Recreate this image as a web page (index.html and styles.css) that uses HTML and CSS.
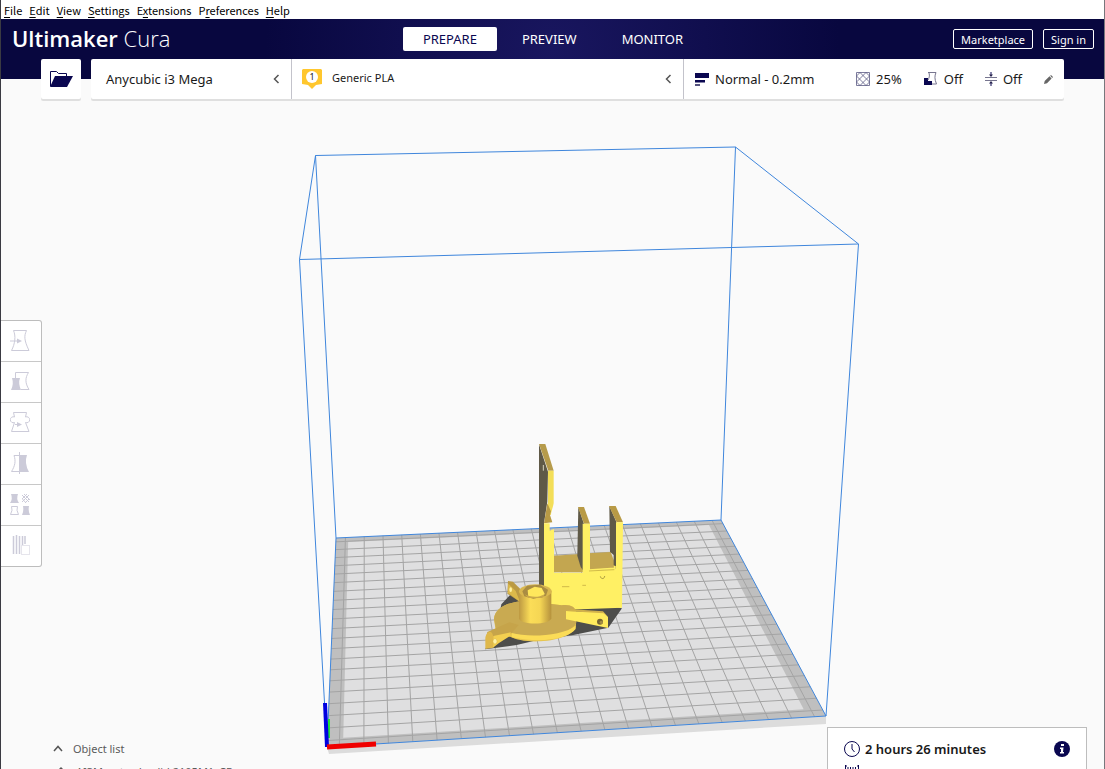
FILE: index.html
```html
<!DOCTYPE html>
<html lang="en">
<head>
<meta charset="utf-8">
<title>Ultimaker Cura</title>
<link rel="stylesheet" href="styles.css">
</head>
<body>
<div class="app">
  <nav class="menubar" aria-label="Application menu">
    <button class="menu"><u>F</u>ile</button>
    <button class="menu"><u>E</u>dit</button>
    <button class="menu"><u>V</u>iew</button>
    <button class="menu"><u>S</u>ettings</button>
    <button class="menu">E<u>x</u>tensions</button>
    <button class="menu">P<u>r</u>eferences</button>
    <button class="menu"><u>H</u>elp</button>
  </nav>

  <header class="header">
    <h1 class="brand"><b>Ultimaker</b> Cura</h1>
    <nav class="stages" aria-label="Stages">
      <button class="stage stage-active">PREPARE</button>
      <button class="stage">PREVIEW</button>
      <button class="stage">MONITOR</button>
    </nav>
    <div class="account">
      <button class="outline">Marketplace</button>
      <button class="outline">Sign in</button>
    </div>
  </header>

  <main class="workspace">
    <svg class="scene" viewBox="1 79 1103 690" preserveAspectRatio="xMidYMid slice" role="img" aria-label="Build plate with model">
      <path d="M327 747 826 716V724L329 754Z" fill="#dcdcdc"/>
      <g id="plate"></g>
      <g fill="none" stroke="#3f86dc" stroke-width="1">
        <path d="M336 538 721 520 826 716 327 747Z"/>
        <path d="M315.500 155.500 735.500 147 858.500 244 299.500 259.500Z"/>
        <path d="M315.500 155.500 336 538M735.500 147 721 520M858.500 244 826 716M299.500 259.500 327 747"/>
      </g>
      <path d="M329 719V738" stroke="#1ee03c" stroke-width="2"/>
      <path d="M325 703 327 747" stroke="#0000e0" stroke-width="4"/>
      <path d="M327 747 376 744" stroke="#f00000" stroke-width="5"/>
      <g transform="translate(470 435) scale(.33333)">
        <path d="M78 592 45 643 140 630 200 616 310 600 415 578 456 520 300 490 130 470 118 482 94 508Z" fill="#4d4d4b"/>
        <path d="M207 28 234 110 232 200 222 265V470H207Z" fill="#5f5947"/>
        <path d="M207 27H226L251 107H235Z" fill="#b69b4b"/>
        <path d="M234 107H251V205C247 225 243 229 243 240L232 238C230 225 234 214 234 198Z" fill="#f3de58"/>
        <path d="M232 205 243 229 240 240 247 262 222 265Z" fill="#b89a45"/>
        <path d="M220 90V107" stroke="#d8d4bd" stroke-width="3"/>
        <path d="M252 362 330 357 340 412H252Z" fill="#c3a650"/>
        <path d="M355 355 422 351 440 398 355 405Z" fill="#c3a650"/>
        <path d="M325 216 342 267V410L332 396 322 362Z" fill="#5f5947"/>
        <path d="M324 216H342L360 266H342Z" fill="#b89a45"/>
        <path d="M418 213 441 265V395L431 390V360L420 350Z" fill="#5f5947"/>
        <path d="M417 213H437L459 262H440Z" fill="#b89a45"/>
        <path d="M222 265H239V287L252 282V413H338V266H360V405L438 401V262H459L456 518 252 526H222Z" fill="#fff064"/>
        <path d="M357 405 434 400V393" fill="none" stroke="#fff064" stroke-width="5"/>
        <path d="M357 408 433 404M276 455H298M337 451H348" stroke="#b9a03c" stroke-width="2"/>
        <path d="M391 424C393 434 404 432 404 423" fill="none" stroke="#857430" stroke-width="2"/>
        <path d="M114 438 129 440 163 474 151 502 112 476Z" fill="#bb9a43"/>
        <path d="M115 446 137 468 150 500 114 474Z" fill="#dcb94a"/>
        <ellipse cx="122" cy="464" rx="4" ry="7" fill="#fff2a6"/>
        <path d="M72 553C74 520 110 501 165 497L275 511C302 507 320 518 318 536V570C317 596 271 616 210 619 168 621 139 614 122 606L78 594Z" fill="#e6c44e"/>
        <path d="M72 552C74 520 110 501 165 497L275 511C302 507 320 518 318 536L319 564C308 588 265 601 210 603 175 604 145 601 122 593L78 582Z" fill="#c9aa51"/>
        <path d="M125 594C175 608 278 603 317 572V582C293 611 218 626 125 607Z" fill="#fbdc57"/>
        <path d="M52 591 118 562 146 570 122 597 88 621 70 627 48 610Z" fill="#c6a44a"/>
        <path d="M61 590C72 594 70 610 70 638L46 642V608C48 597 54 590 61 590Z" fill="#dfb84b"/>
        <path d="M70 603 122 592V602L87 624 69 638Z" fill="#f3cf50"/>
        <ellipse cx="75" cy="619" rx="6" ry="8" fill="#fff2a6" stroke="#cfa940"/>
        <path d="M288 528 400 532 414 546V579L288 553Z" fill="#ffeb5d"/>
        <path d="M288 528 306 523 399 529 414 545 400 535Z" fill="#d1b14c"/>
        <circle cx="390" cy="560" r="9" fill="#746333"/><circle cx="394" cy="562" r="5" fill="#a28b45"/>
        <path d="M147 467V550C149 571 240 571 244 550V467Z" fill="url(#hub)"/>
        <ellipse cx="196" cy="469" rx="49" ry="21" fill="#d9b74f"/>
        <path d="M157 469 171 452 209 449 234 464 228 482 190 491 163 484Z" fill="#a98c42"/>
        <path d="M173 466 194 455 215 459 224 476 218 487H175Z" fill="#ffe75c"/>
        <path d="M164 478C178 484 200 492 225 477L217 489H175Z" fill="#c9a84a"/>
      </g>
      <defs>
        <linearGradient id="hub"><stop stop-color="#bd9942"/><stop offset=".35" stop-color="#fbdd58"/><stop offset=".65" stop-color="#f5d654"/><stop offset="1" stop-color="#b5913d"/></linearGradient>
      </defs>
    </svg>

    <div class="configbar">
      <button class="open" aria-label="Open file">
        <svg width="24" height="18" viewBox="0 0 24 18"><path d="M1.500 16V1.500H7.500L9.500 3.500H17.500V6" fill="none" stroke="#0a0750"/><path d="M6 6H24L18 17H1Z" fill="#0a0750"/></svg>
      </button>
      <div class="panels">
        <button class="panel machine">
          <span>Anycubic i3 Mega</span>
          <svg class="chev" width="7" height="10" viewBox="0 0 7 10"><path d="M5.500 1 1.500 5 5.500 9"/></svg>
        </button>
        <button class="panel material">
          <svg width="20" height="20" viewBox="0 0 20 20"><path d="M1 0H19L20 1V15L14 16 10 20 6 16 0 15V1Z" fill="#ffc72e"/><circle cx="10" cy="8" r="6" fill="#fff"/><text x="10" y="11" class="badge">1</text></svg>
          <span class="material-name">Generic PLA</span>
          <svg class="chev" width="7" height="10" viewBox="0 0 7 10"><path d="M5.500 1 1.500 5 5.500 9"/></svg>
        </button>
        <button class="panel profile">
          <svg width="14" height="13" viewBox="0 0 14 13"><path d="M0 0H14V5H0ZM0 7H10V9.500H0Z" fill="#0a0750"/><path d="M0 11H5V13H0Z" fill="#55537f"/></svg>
          <span class="profile-name">Normal - 0.2mm</span>
          <span class="stat"><svg width="14" height="14" viewBox="0 0 14 14"><path d="M.5.5H13.500V13.500H.5ZM.5 4 4 .5 13.500 10 10 13.500.5 4M10 .5.5 10 4 13.500 13.500 4 10 .5" fill="none" stroke="#5c5a84" stroke-width=".8"/></svg>25%</span>
          <span class="stat"><svg width="14" height="14" viewBox="0 0 14 14"><path d="M4 .5H12C10.500 4 10.500 7 12.500 12H8" fill="none" stroke="#77758f"/><path d="M0 6H4V9H8V13H0Z" fill="#0a0750"/><path d="M5 1C6 4 5 6 4 8" fill="none" stroke="#77758f"/></svg>Off</span>
          <span class="stat"><svg width="12" height="14" viewBox="0 0 12 14"><path d="M0 5.500H12M0 8.500H12" stroke="#77758f"/><path d="M6 0V4M6 10V14" stroke="#0a0750"/><path d="M4 2.500H8L6 5ZM4 11.500H8L6 9Z" fill="#26234e"/></svg>Off</span>
          <svg class="pencil" width="9" height="9" viewBox="0 0 9 9"><path d="M0 9 .7 6 5.500 1.300 7.600 3.500 3 8.300ZM6.200.7 7 0 9 2 8.200 2.900Z" fill="#666"/></svg>
        </button>
      </div>
    </div>

    <div class="tools" role="toolbar" aria-label="Tools">
      <button class="tool" aria-label="Move"><svg viewBox="0 0 20 22"><path d="M3.500 1.500H16.500C14 7 14 11 19 21.500H1.500C5 15 6 7 3.500 1.500Z"/><path d="M0 12H9"/><path class="solid" d="M7 9.500 12 12 7 14.500Z"/></svg></button>
      <button class="tool" aria-label="Scale"><svg viewBox="0 0 20 22"><path d="M5.500 8V2.500H18.500C15 8 15 13 19 19.500H11"/><path class="solid" d="M2 8H10Q8 13 11 20H1Q4 14 2 8Z"/></svg></button>
      <button class="tool" aria-label="Rotate"><svg viewBox="0 0 20 22"><path d="M4.500 6 3.500 1.500H16.500L15.500 6M15.500 11.500 19 20.500H1.500L4.500 11.500M4.500 6A3 3 0 1 0 4.500 11.500M15.500 6A3 3 0 1 1 15.500 11.500M5 13.500H9"/><path class="solid" d="M7 11 12 13.500 7 16Z"/></svg></button>
      <button class="tool" aria-label="Mirror"><svg viewBox="0 0 20 22"><path d="M9.500 0V22M9 3.500H4C6 9 5 14 1.500 19.500H9"/><path class="solid" d="M10 3H17Q14 11 19 20H10Z"/></svg></button>
      <button class="tool" aria-label="Per model settings"><svg viewBox="0 0 20 22"><path class="solid" d="M1 1H8Q6 6 9 10H0Q3 6 1 1Z"/><path d="M12 2 19 9M12.500 6 16 10M14 1 20 7M12 9 19 2M12 6 17 1M15 10 19 6"/><path d="M1.500 13.500H7.500Q6 17 8.500 21.500H.5Q3 17 1.500 13.500Z"/><path class="solid" d="M13 13H19Q18 18 20 22H12Q14 18 13 13Z"/></svg></button>
      <button class="tool" aria-label="Support blocker"><svg viewBox="0 0 20 22"><path d="M3.500 2V20M6.500 1V20M9.500 2V20M12.500 2V11M15 2V10" stroke-width="1.500"/><path d="M11.500 11.500H19.500V20.500H11.500Z" stroke-dasharray="1 1"/></svg></button>
    </div>

    <footer class="bottom">
      <section class="objects">
        <button class="objects-toggle"><svg width="10" height="7" viewBox="0 0 10 7"><path d="M1 6 5 1.500 9 6" fill="none" stroke="#555" stroke-width="1.500"/></svg>Object list</button>
        <div class="object"><svg width="10" height="10" viewBox="0 0 10 10"><path d="M5 0 9 4H1Z" fill="#555"/></svg>AI3M_extruder_lid 2105M1_CR</div>
      </section>
      <section class="job">
        <div class="job-row">
          <svg width="16" height="16" viewBox="0 0 16 16"><circle cx="8" cy="8" r="7.500" fill="none" stroke="#0a0750"/><path d="M8 3V8L10.500 11" fill="none" stroke="#0a0750"/></svg>
          <strong class="job-time">2 hours 26 minutes</strong>
          <button class="info" aria-label="Print details"><svg width="16" height="16" viewBox="0 0 16 16"><circle cx="8" cy="8" r="8" fill="#0a0750"/><path d="M7 3H10V5H7ZM6 6.500H9.500L9 11H10V12.500H6V11H7V8H6Z" fill="#fff"/></svg></button>
        </div>
        <svg class="spool" width="14" height="14" viewBox="0 0 14 14"><path d="M.5 0V14M13.500 0V14M3 2V12M5.500 2V12M8 2V12M10.500 2V12M0 1H2M12 1H14" stroke="#0a0750"/></svg>
      </section>
    </footer>
  </main>
</div>
<script src="plate.js"></script>
</body>
</html>
```
FILE: styles.css
```css
* { box-sizing: border-box; }

body {
  margin: 0;
  overflow: hidden;
  font-family: "Noto Sans", sans-serif;
  font-size: 13px;
  color: #191919;
  background: #fafafa;
}

button {
  margin: 0;
  padding: 0;
  border: 0;
  background: none;
  font: inherit;
  color: inherit;
}

svg { flex: none; }

.app {
  display: flex;
  flex-direction: column;
  height: 100vh;
  border-left: 1px solid #3a3a42;
  border-right: 1px solid #77777c;
}

.menubar {
  display: flex;
  gap: 7px;
  height: 19px;
  padding: 0 3px;
  background: #fff;
  color: #000;
  font-family: "Noto Sans CJK JP", sans-serif;
  font-size: 11px;
  line-height: 18px;
}

.menu u { text-underline-offset: 2px; }

.header {
  display: grid;
  grid-template-columns: 1fr auto 1fr;
  align-items: center;
  height: 60px;
  padding: 0 10px 20px 11px;
  background: radial-gradient(circle at 50% 50%, #19165f, #08073f 52%);
  color: #fff;
}

.brand {
  margin: 0;
  padding-bottom: 2px;
  font-family: "Open Sans", sans-serif;
  font-size: 22px;
  font-weight: 300;
  line-height: 38px;
}

.brand b { font-weight: 600; }

.stages { display: flex; gap: 5px; }

.stage {
  height: 24px;
  padding: 0 20px;
  border-radius: 2px;
  line-height: 24px;
}

.stage-active { background: #fff; color: #0a0750; }

.account { display: flex; justify-content: flex-end; gap: 10px; }

.outline {
  height: 20px;
  padding: 0 7px;
  border: 1px solid #fff;
  border-radius: 2px;
  font-size: 11px;
  line-height: 19px;
}

.workspace {
  position: relative;
  display: flex;
  flex: 1;
  flex-direction: column;
  min-height: 0;
}

.scene {
  position: absolute;
  inset: 0;
  width: 100%;
  height: 100%;
}

.configbar {
  position: relative;
  display: flex;
  gap: 10px;
  margin: -20px 40px 0;
}

.open,
.panels {
  height: 40px;
  border-radius: 2px;
  background: #fff;
  box-shadow: 0 2px 0 #dfdfdf;
}

.open {
  display: grid;
  place-items: center;
  width: 40px;
}

.panels {
  display: grid;
  flex: 1;
  grid-template-columns: 201fr 392fr 380fr;
}

.panel {
  display: flex;
  align-items: center;
  padding: 0 11px 0 10px;
  border-right: 1px solid #c3c3cb;
  text-align: left;
}

.machine { padding-left: 15px; }

.profile { padding-left: 11px; border-right: 0; }

.chev {
  margin-left: auto;
  fill: none;
  stroke: #555;
  stroke-width: 1.5;
}

.badge {
  font-size: 9px;
  fill: #191919;
  text-anchor: middle;
}

.material-name {
  padding: 0 0 4px 10px;
  font-size: 11px;
}

.profile-name { margin: 0 auto 0 6px; }

.stat {
  display: flex;
  align-items: center;
  gap: 6px;
  margin-right: 22px;
}

.tools {
  position: relative;
  display: flex;
  flex-direction: column;
  align-self: flex-start;
  margin-top: 221px;
  border: 1px solid #bdbdbd;
  border-left: 0;
  border-radius: 0 3px 3px 0;
  background: #fff;
}

.tool {
  display: grid;
  place-items: center;
  width: 40px;
  height: 40px;
  padding: 0 2px 2px 0;
}

.tool + .tool { height: 41px; border-top: 1px solid #c8c8c8; }

.tool svg {
  width: 20px;
  height: 22px;
  fill: none;
  stroke: #cccbd9;
}

.tool .solid { fill: #cccbd9; stroke: none; }

.bottom {
  position: relative;
  display: flex;
  align-items: flex-start;
  justify-content: space-between;
  height: 42px;
  margin-top: auto;
  padding: 0 17px 0 52px;
  overflow: hidden;
}

.objects { color: #5b5b5b; font-size: 11px; }

.objects-toggle {
  display: flex;
  align-items: center;
  gap: 10px;
  height: 24px;
  margin-top: 9px;
}

.object {
  display: flex;
  align-items: center;
  gap: 10px;
  padding-left: 3px;
  line-height: 24px;
}

.job {
  width: 260px;
  height: 60px;
  padding: 9px 16px;
  border: 1px solid #bdbdbd;
  background: #fff;
}

.job-row {
  display: flex;
  align-items: center;
  gap: 5px;
  height: 24px;
}

.job-time { font-size: 13px; font-weight: 600; }

.info { display: flex; margin-left: auto; }

.spool { display: block; margin: 4px 1px; }
```
FILE: plate.js
```javascript
// Draws the build plate: a 210 mm square seen in perspective, with 10 mm cells.
const corners = { backLeft: [336, 538], backRight: [721, 520], frontRight: [826, 716], frontLeft: [327, 747] };
const CELLS = 21;

function makeProjection({ backLeft: [x0, y0], backRight: [x1, y1], frontRight: [x2, y2], frontLeft: [x3, y3] }) {
  const dx1 = x1 - x2, dx2 = x3 - x2, sx = x0 - x1 + x2 - x3;
  const dy1 = y1 - y2, dy2 = y3 - y2, sy = y0 - y1 + y2 - y3;
  const det = dx1 * dy2 - dx2 * dy1;
  const g = (sx * dy2 - dx2 * sy) / det;
  const h = (dx1 * sy - sx * dy1) / det;
  return (col, row) => {
    const u = col / CELLS, v = row / CELLS, w = g * u + h * v + 1;
    const x = ((x1 - x0 + g * x1) * u + (x3 - x0 + h * x3) * v + x0) / w;
    const y = ((y1 - y0 + g * y1) * u + (y3 - y0 + h * y3) * v + y0) / w;
    return x.toFixed(2) + " " + y.toFixed(2);
  };
}

const project = makeProjection(corners);
const plate = document.getElementById("plate");

function addPath(d, attributes) {
  const path = document.createElementNS("http://www.w3.org/2000/svg", "path");
  path.setAttribute("d", d);
  for (const [name, value] of Object.entries(attributes)) path.setAttribute(name, value);
  plate.append(path);
}

function area(left, top, right, bottom) {
  return `M${project(left, top)}L${project(right, top)}L${project(right, bottom)}L${project(left, bottom)}Z`;
}

addPath(area(0, 0, CELLS, CELLS), { fill: "#bfbfbf" });
addPath(area(0.65, 0.6, 20.2, 20.35), { fill: "#dfdfe0" });

let lines = "";
for (let i = 0.5; i < CELLS; i++) {
  lines += `M${project(i, 0)}L${project(i, CELLS)}M${project(0, i)}L${project(CELLS, i)}`;
}
addPath(lines, { stroke: "#a4a4a4", fill: "none" });
```
